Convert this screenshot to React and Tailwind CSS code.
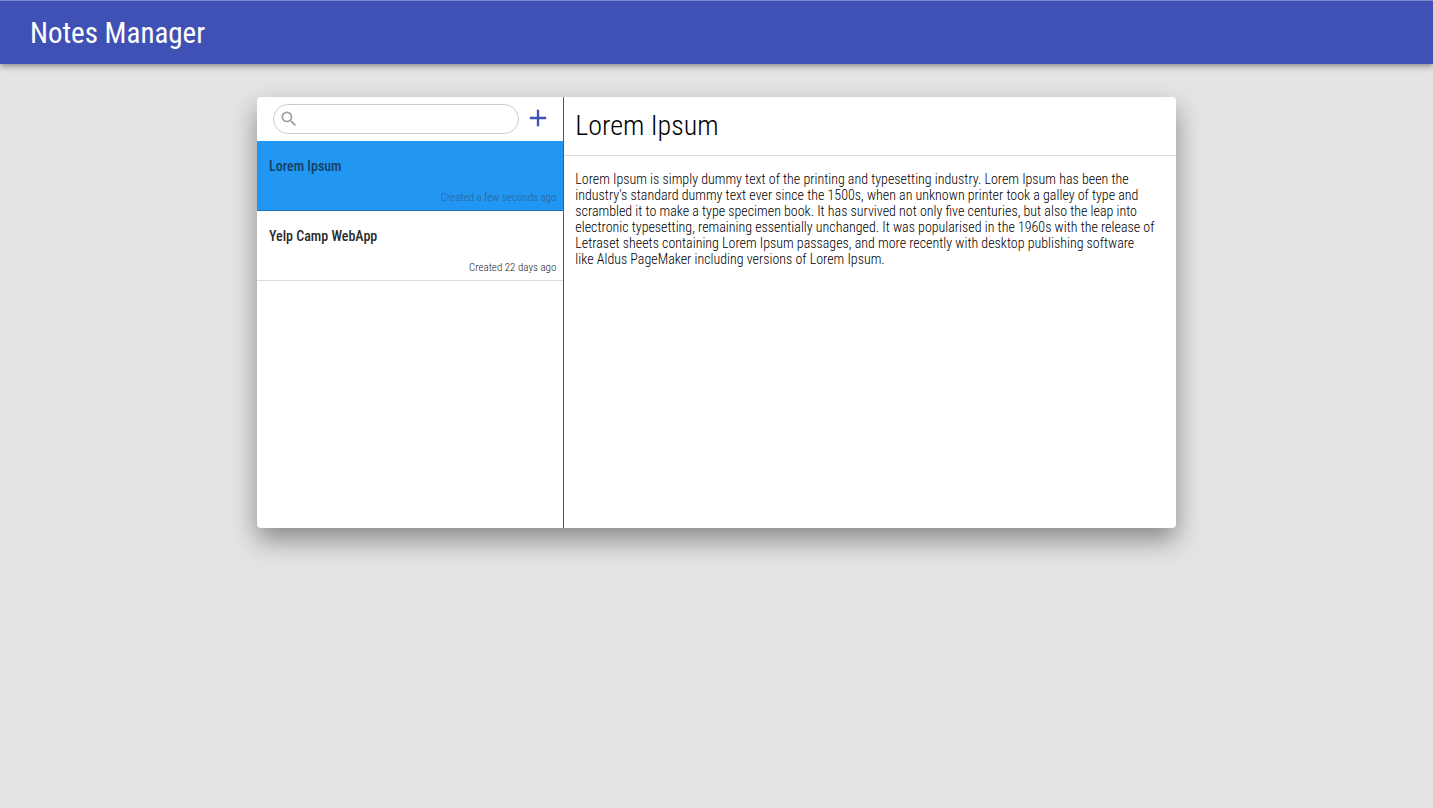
import { MdAdd, MdSearch } from "react-icons/md";

const notes = [
  { id: 1, title: "Lorem Ipsum", created: "Created a few seconds ago", active: true },
  { id: 2, title: "Yelp Camp WebApp", created: "Created 22 days ago", active: false },
];

const body = [
  "Lorem Ipsum is simply dummy text of the printing and typesetting industry. Lorem Ipsum has been the",
  "industry's standard dummy text ever since the 1500s, when an unknown printer took a galley of type and",
  "scrambled it to make a type specimen book. It has survived not only five centuries, but also the leap into",
  "electronic typesetting, remaining essentially unchanged. It was popularised in the 1960s with the release of",
  "Letraset sheets containing Lorem Ipsum passages, and more recently with desktop publishing software",
  "like Aldus PageMaker including versions of Lorem Ipsum.",
];

function NoteItem({ note }) {
  return (
    <li>
      <button
        type="button"
        aria-current={note.active}
        className={
          note.active
            ? "flex h-[70px] w-full flex-col justify-between border-b border-[#1c6fb5] bg-[#2196f3] pt-[17px] pr-[7px] pb-1 pl-3 text-left"
            : "flex h-[70px] w-full flex-col justify-between border-b border-[#dcdcdc] bg-white pt-[17px] pr-[7px] pb-1 pl-3 text-left"
        }
      >
        <span
          className={
            note.active
              ? "text-sm leading-4 font-medium text-[#15405f]"
              : "text-sm leading-4 font-medium text-[#2b2b2b]"
          }
        >
          {note.title}
        </span>
        <span
          className={
            note.active
              ? "self-end text-[11px] leading-4 font-light text-[#35608a]"
              : "self-end text-[11px] leading-4 font-light text-[#222222]"
          }
        >
          {note.created}
        </span>
      </button>
    </li>
  );
}

export default function App() {
  return (
    <div className="min-h-screen bg-[#e4e4e4] font-['Roboto_Condensed','Roboto',sans-serif] text-[#212121]">
      <header className="flex h-16 items-center border-t border-[#7f8ccb] bg-[#3f51b5] px-[30px] shadow-[0_2px_4px_-1px_rgba(0,0,0,0.2),0_4px_5px_0_rgba(0,0,0,0.14),0_1px_10px_0_rgba(0,0,0,0.12)]">
        <h1 className="text-[29px] leading-8 text-white">Notes Manager</h1>
      </header>
      <main className="px-6 pt-[33px] pb-12">
        <div className="mx-auto flex min-h-[431px] max-w-[919px] overflow-hidden rounded bg-white shadow-[0_12px_26px_rgba(0,0,0,0.4)]">
          <aside className="w-1/3 shrink-0">
            <div className="flex h-11 items-center gap-[5px] pr-[11px] pl-4">
              <label className="flex h-[30px] min-w-0 flex-1 items-center rounded-full border border-[#cccccc] px-[5px]">
                <MdSearch className="size-5 shrink-0 text-[#9e9e9e]" />
                <input
                  type="search"
                  aria-label="Search notes"
                  className="w-full min-w-0 bg-transparent px-1 text-sm outline-none"
                />
              </label>
              <button type="button" aria-label="Add note" className="pb-0.5 text-[#3f51b5]">
                <MdAdd className="size-7" />
              </button>
            </div>
            <ul>
              {notes.map((note) => (
                <NoteItem key={note.id} note={note} />
              ))}
            </ul>
          </aside>
          <article className="min-w-0 flex-1 border-l border-[#555555]">
            <h2 className="flex h-[59px] items-center border-b border-[#dcdcdc] px-[11px] text-[28px] leading-8 font-light text-black">
              Lorem Ipsum
            </h2>
            <p className="px-[11px] pt-[15px] text-sm leading-4 font-light text-black">
              {body.map((line) => (
                <span key={line} className="block">
                  {line}
                </span>
              ))}
            </p>
          </article>
        </div>
      </main>
    </div>
  );
}
